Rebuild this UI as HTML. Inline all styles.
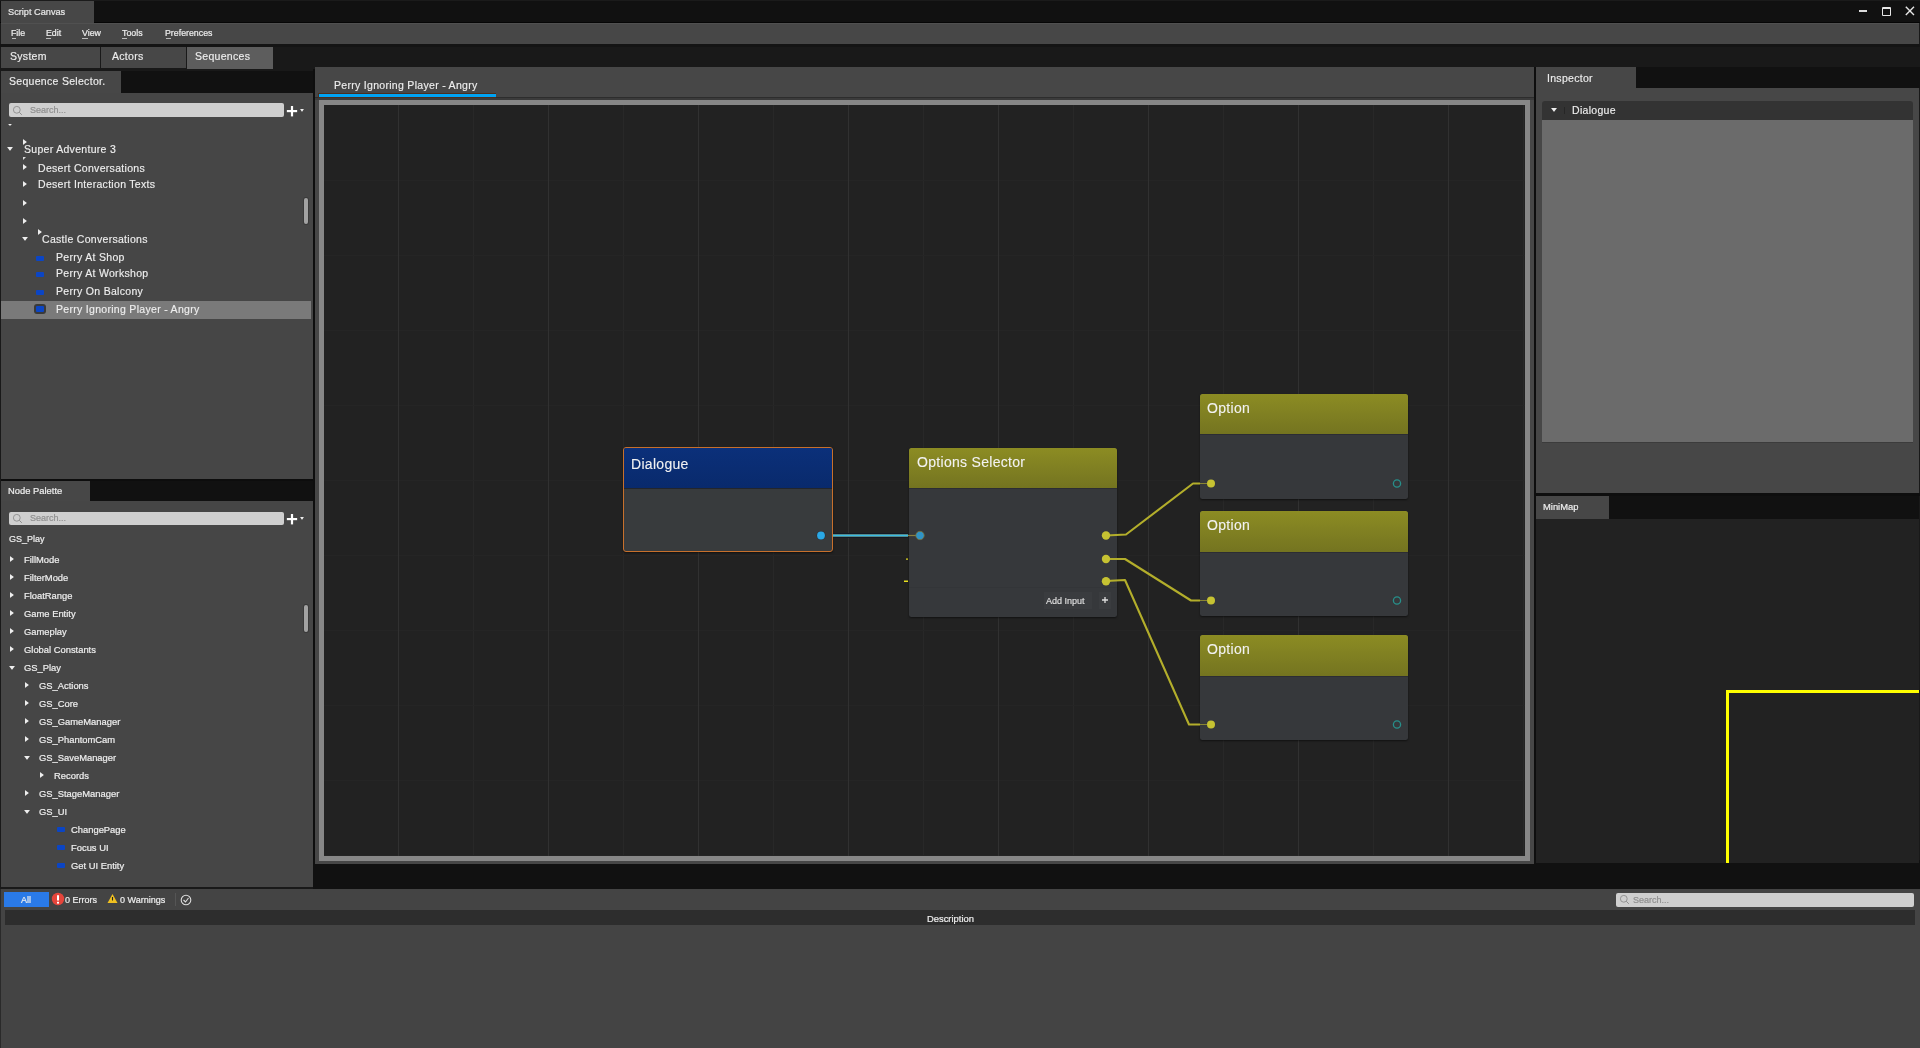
<!DOCTYPE html>
<html><head><meta charset="utf-8">
<style>
*{box-sizing:border-box;margin:0;padding:0}
html,body{width:1920px;height:1048px;overflow:hidden;background:#191919;font-family:"Liberation Sans",sans-serif;color:#eeeeee}
.a{position:absolute}
.t{position:absolute;white-space:nowrap;line-height:1;will-change:transform}
.ar{font-size:10.5px;letter-spacing:0.3px;-webkit-text-stroke:0.15px #eee;color:#eee}
.np{font-size:9.4px!important}
.os{font-size:9px;-webkit-text-stroke:0.2px currentColor}
.rt{position:absolute;filter:drop-shadow(0 0 0.6px #111);width:0;height:0;border-top:3.5px solid transparent;border-bottom:3.5px solid transparent;border-left:4px solid #eee}
.dn{position:absolute;filter:drop-shadow(0 0 0.6px #111);width:0;height:0;border-left:3.5px solid transparent;border-right:3.5px solid transparent;border-top:4px solid #eee}
.node{position:absolute;background:#36383b;border-radius:2.5px;overflow:hidden;box-shadow:0 1px 2px rgba(0,0,0,.5)}
.hd{background:linear-gradient(#8c8c23,#808022 50%,#747420);border-bottom:1px solid #2c2d33;box-sizing:content-box}
.nt{font-size:14px;color:#f2f2f2;letter-spacing:0.3px;-webkit-text-stroke:0.1px #f2f2f2}
.ic{position:absolute;width:8px;height:5px;background:#0b45c4;border-radius:1px}
</style></head><body>
<!-- title bar -->
<div class="a" style="left:0;top:0;width:1920px;height:23px;background:#111;border-top:1px solid #1b1b1b;border-bottom:1px solid #060606"></div>
<div class="a" style="left:0;top:44px;width:1920px;height:3px;background:#141414"></div>
<div class="a" style="left:1px;top:1px;width:93px;height:22px;background:#474747"></div>
<div class="t os" style="left:7.5px;top:8px;color:#e8e8e8;font-size:9.2px">Script Canvas</div>
<!-- window controls -->
<div class="a" style="left:1859px;top:10px;width:8px;height:2px;background:#ddd"></div>
<div class="a" style="left:1882px;top:7px;width:8.5px;height:8.5px;border:1.5px solid #e6e6e6;border-top-width:2px;border-radius:1px"></div>
<svg class="a" style="left:1905px;top:6px" width="10" height="10"><path d="M0.8 0.8L9 9M9 0.8L0.8 9" stroke="#e6e6e6" stroke-width="1.4"/></svg>
<!-- menu bar -->
<div class="a" style="left:1px;top:23px;width:1918px;height:21px;background:#474747;border-top:1px solid #505050"></div>
<div class="t os" style="left:11px;top:29px;font-size:8.8px">File</div>
<div class="t os" style="left:46px;top:29px;font-size:8.8px">Edit</div>
<div class="t os" style="left:82px;top:29px;font-size:8.8px">View</div>
<div class="t os" style="left:122px;top:29px;font-size:8.8px">Tools</div>
<div class="t os" style="left:165px;top:29px;font-size:8.8px">Preferences</div>
<div class="a" style="left:12px;top:37.5px;width:4px;height:1px;background:#bbb"></div>
<div class="a" style="left:46px;top:38px;width:5px;height:1px;background:#bbb"></div>
<div class="a" style="left:82px;top:38px;width:6px;height:1px;background:#bbb"></div>
<div class="a" style="left:122px;top:38px;width:5px;height:1px;background:#bbb"></div>
<div class="a" style="left:166px;top:38px;width:5px;height:1px;background:#bbb"></div>
<!-- top tabs -->
<div class="a" style="left:1px;top:47px;width:99px;height:21px;background:#474747"></div>
<div class="a" style="left:101px;top:47px;width:85px;height:21px;background:#474747"></div>
<div class="a" style="left:187px;top:47px;width:86px;height:22px;background:#5d5d5d"></div>
<div class="t ar" style="left:10px;top:50.7px">System</div>
<div class="t ar" style="left:112px;top:50.7px">Actors</div>
<div class="t ar" style="left:195px;top:50.7px">Sequences</div>

<!-- LEFT PANEL: sequence selector -->
<div class="a" style="left:1px;top:71px;width:312px;height:22px;background:#111"></div>
<div class="a" style="left:1px;top:71px;width:120px;height:22px;background:#474747"></div>
<div class="t ar" style="left:9px;top:76px">Sequence Selector.</div>
<div class="a" style="left:1px;top:93px;width:312px;height:386px;background:#464646"></div>
<!-- search -->
<div class="a" style="left:9px;top:103px;width:275px;height:14px;background:#cfcfcf;border-radius:2px"></div>
<svg class="a" style="left:12px;top:105px" width="11" height="11"><circle cx="4.8" cy="4.8" r="3.4" stroke="#8c8c8c" stroke-width="0.9" fill="none"/><path d="M7.3 7.3L9.8 9.8" stroke="#8c8c8c" stroke-width="1"/></svg>
<div class="t os" style="left:30px;top:106px;color:#8f8f8f">Search...</div>
<svg class="a" style="left:286px;top:105px;filter:drop-shadow(0 0 0.7px #000)" width="13" height="13"><path d="M6 1V11.5M0.8 6.2H11.2" stroke="#fff" stroke-width="2.3"/></svg>
<div class="dn" style="left:299.5px;top:109px;border-left-width:2px;border-right-width:2px;border-top-width:3px"></div>

<!-- tree -->
<div class="dn" style="left:8px;top:124px;border-left-width:2.5px;border-right-width:2.5px;border-top-width:2.5px"></div>
<div class="rt" style="left:23px;top:139px"></div>
<div class="a" style="left:23px;top:157px;width:0;height:0;border-left:3.5px solid #ddd;border-bottom:3px solid transparent"></div>
<div class="dn" style="left:7px;top:147px"></div>
<div class="t ar" style="left:24px;top:144px">Super Adventure 3</div>
<div class="rt" style="left:23px;top:164px"></div>
<div class="t ar" style="left:38px;top:163px">Desert Conversations</div>
<div class="rt" style="left:23px;top:181px"></div>
<div class="t ar" style="left:38px;top:179px">Desert Interaction Texts</div>
<div class="rt" style="left:23px;top:200px"></div>
<div class="rt" style="left:23px;top:218px"></div>
<div class="rt" style="left:38px;top:229px"></div>
<div class="dn" style="left:22px;top:237px"></div>
<div class="t ar" style="left:42px;top:234px">Castle Conversations</div>
<div class="ic" style="left:36px;top:256px"></div>
<div class="t ar" style="left:56px;top:252px">Perry At Shop</div>
<div class="ic" style="left:36px;top:272px"></div>
<div class="t ar" style="left:56px;top:268px">Perry At Workshop</div>
<div class="ic" style="left:36px;top:290px"></div>
<div class="t ar" style="left:56px;top:286px">Perry On Balcony</div>
<div class="a" style="left:1px;top:301px;width:310px;height:18px;background:#7a7a7a"></div>
<div class="a" style="left:34px;top:304px;width:12px;height:10px;background:#3a3a3a;border-radius:3px"></div>
<div class="ic" style="left:36px;top:306px;width:8px;height:6px"></div>
<div class="t ar" style="left:56px;top:304px">Perry Ignoring Player - Angry</div>
<!-- scrollbar -->
<div class="a" style="left:304px;top:197.5px;width:3.5px;height:26.5px;background:#a2a2a2;border-radius:2px;box-shadow:0 0 0 1px #3a3a3a"></div>

<!-- NODE PALETTE -->
<div class="a" style="left:1px;top:479px;width:312px;height:2px;background:#0d0d0d"></div>
<div class="a" style="left:1px;top:481px;width:312px;height:20px;background:#111"></div>
<div class="a" style="left:1px;top:481px;width:89px;height:20px;background:#474747"></div>
<div class="t os" style="left:8px;top:486px;font-size:9.4px">Node Palette</div>
<div class="a" style="left:1px;top:501px;width:312px;height:386px;background:#464646"></div>
<div class="a" style="left:9px;top:512px;width:275px;height:13px;background:#cfcfcf;border-radius:2px"></div>
<svg class="a" style="left:12px;top:513px" width="11" height="11"><circle cx="4.8" cy="4.8" r="3.4" stroke="#8c8c8c" stroke-width="0.9" fill="none"/><path d="M7.3 7.3L9.8 9.8" stroke="#8c8c8c" stroke-width="1"/></svg>
<div class="t os" style="left:30px;top:514px;color:#8f8f8f">Search...</div>
<svg class="a" style="left:286px;top:513px;filter:drop-shadow(0 0 0.7px #000)" width="13" height="13"><path d="M6 1V11.5M0.8 6.2H11.2" stroke="#fff" stroke-width="2.3"/></svg>
<div class="dn" style="left:299.5px;top:517px;border-left-width:2px;border-right-width:2px;border-top-width:3px"></div>
<div class="t os np" style="left:9px;top:535px;font-size:9px!important">GS_Play</div>
<div class="rt" style="left:10px;top:556px"></div>
<div class="t os np" style="left:24px;top:555px">FillMode</div>
<div class="rt" style="left:10px;top:574px"></div>
<div class="t os np" style="left:24px;top:573px">FilterMode</div>
<div class="rt" style="left:10px;top:592px"></div>
<div class="t os np" style="left:24px;top:591px">FloatRange</div>
<div class="rt" style="left:10px;top:610px"></div>
<div class="t os np" style="left:24px;top:609px">Game Entity</div>
<div class="rt" style="left:10px;top:628px"></div>
<div class="t os np" style="left:24px;top:627px">Gameplay</div>
<div class="rt" style="left:10px;top:646px"></div>
<div class="t os np" style="left:24px;top:645px">Global Constants</div>
<div class="dn" style="left:9px;top:666px"></div>
<div class="t os np" style="left:24px;top:663px">GS_Play</div>
<div class="rt" style="left:25px;top:682px"></div>
<div class="t os np" style="left:39px;top:681px">GS_Actions</div>
<div class="rt" style="left:25px;top:700px"></div>
<div class="t os np" style="left:39px;top:699px">GS_Core</div>
<div class="rt" style="left:25px;top:718px"></div>
<div class="t os np" style="left:39px;top:717px">GS_GameManager</div>
<div class="rt" style="left:25px;top:736px"></div>
<div class="t os np" style="left:39px;top:735px">GS_PhantomCam</div>
<div class="dn" style="left:24px;top:756px"></div>
<div class="t os np" style="left:39px;top:753px">GS_SaveManager</div>
<div class="rt" style="left:40px;top:772px"></div>
<div class="t os np" style="left:54px;top:771px">Records</div>
<div class="rt" style="left:25px;top:790px"></div>
<div class="t os np" style="left:39px;top:789px">GS_StageManager</div>
<div class="dn" style="left:24px;top:810px"></div>
<div class="t os np" style="left:39px;top:807px">GS_UI</div>
<div class="ic" style="left:57px;top:827px"></div>
<div class="t os np" style="left:71px;top:825px">ChangePage</div>
<div class="ic" style="left:57px;top:845px"></div>
<div class="t os np" style="left:71px;top:843px">Focus UI</div>
<div class="ic" style="left:57px;top:863px"></div>
<div class="t os np" style="left:71px;top:861px">Get UI Entity</div>
<div class="a" style="left:304px;top:605px;width:3.5px;height:27px;background:#a2a2a2;border-radius:2px;box-shadow:0 0 0 1px #3a3a3a"></div>

<!-- CANVAS PANEL -->
<div class="a" style="left:313px;top:69px;width:2px;height:820px;background:#0e0e0e"></div>
<div class="a" style="left:1534px;top:67px;width:2px;height:797px;background:#0e0e0e"></div>
<div class="a" style="left:1536px;top:493px;width:384px;height:3px;background:#0e0e0e"></div>
<div class="a" style="left:313px;top:860px;width:1607px;height:29px;background:#111"></div>
<div class="a" style="left:315px;top:67px;width:1219px;height:797px;background:#474747"></div>
<div class="t ar" style="left:334px;top:80px">Perry Ignoring Player - Angry</div>
<div class="a" style="left:315px;top:97px;width:1219px;height:3px;background:#3b3b3b;border-top:1px solid #2d2d2d"></div>
<div class="a" style="left:318px;top:93px;width:178px;height:5px;background:#4a2e1e"></div>
<div class="a" style="left:319px;top:94px;width:177px;height:3px;background:#00a2f2"></div>
<div class="a" style="left:319px;top:100px;width:1211px;height:761px;background:#878787"></div>
<svg class="a" style="left:324px;top:105px" width="1201" height="751">
<rect width="1201" height="751" fill="#222"/>
<rect x="149" y="0" width="1" height="751" fill="#282828"/>
<rect x="299" y="0" width="1" height="751" fill="#282828"/>
<rect x="449" y="0" width="1" height="751" fill="#282828"/>
<rect x="599" y="0" width="1" height="751" fill="#282828"/>
<rect x="749" y="0" width="1" height="751" fill="#282828"/>
<rect x="899" y="0" width="1" height="751" fill="#282828"/>
<rect x="1049" y="0" width="1" height="751" fill="#282828"/>
<rect x="1199" y="0" width="1" height="751" fill="#282828"/>
<rect x="0" y="75" width="1201" height="1" fill="#252525"/>
<rect x="0" y="150" width="1201" height="1" fill="#252525"/>
<rect x="0" y="225" width="1201" height="1" fill="#252525"/>
<rect x="0" y="300" width="1201" height="1" fill="#252525"/>
<rect x="0" y="375" width="1201" height="1" fill="#252525"/>
<rect x="0" y="450" width="1201" height="1" fill="#252525"/>
<rect x="0" y="525" width="1201" height="1" fill="#252525"/>
<rect x="0" y="600" width="1201" height="1" fill="#252525"/>
<rect x="0" y="675" width="1201" height="1" fill="#252525"/>
<rect x="0" y="750" width="1201" height="1" fill="#252525"/>
<rect x="74" y="0" width="1" height="751" fill="#313131"/>
<rect x="224" y="0" width="1" height="751" fill="#313131"/>
<rect x="374" y="0" width="1" height="751" fill="#313131"/>
<rect x="524" y="0" width="1" height="751" fill="#313131"/>
<rect x="674" y="0" width="1" height="751" fill="#313131"/>
<rect x="824" y="0" width="1" height="751" fill="#313131"/>
<rect x="974" y="0" width="1" height="751" fill="#313131"/>
<rect x="1124" y="0" width="1" height="751" fill="#313131"/>
</svg>
<!-- nodes -->
<div class="a node" style="left:623px;top:447px;width:210px;height:105px;border:1.5px solid #c7702c;border-radius:3px;background:#383b3d">
 <div class="hd" style="height:39.5px;background:linear-gradient(#0b307a,#092a6c);border-bottom-color:#23262c"></div>
</div>
<div class="t nt" style="left:631px;top:457px">Dialogue</div>
<div class="a node" style="left:909px;top:448px;width:208px;height:169px">
 <div class="hd ol" style="height:40px"></div>
 <div class="a" style="left:0;top:139px;width:208px;height:1px;background:#333538"></div>
 <div class="a" style="left:135px;top:144px;width:48px;height:17px;background:#3a3c3f"></div>
 <div class="a" style="left:190px;top:144px;width:12px;height:17px;background:#3a3c3f"></div>
</div>
<div class="t nt" style="left:917px;top:455px">Options Selector</div>
<div class="t os" style="left:1046px;top:597px;color:#ddd">Add Input</div>
<svg class="a" style="left:1101px;top:596px" width="8" height="8"><path d="M4 1V7M1 4H7" stroke="#ddd" stroke-width="1.3"/></svg>
<div class="a node" style="left:1200px;top:394px;width:208px;height:105px"><div class="hd ol" style="height:40px"></div></div>
<div class="t nt" style="left:1207px;top:401px">Option</div>
<div class="a node" style="left:1200px;top:511px;width:208px;height:105px"><div class="hd ol" style="height:41px"></div></div>
<div class="t nt" style="left:1207px;top:518px">Option</div>
<div class="a node" style="left:1200px;top:635px;width:208px;height:105px"><div class="hd ol" style="height:41px"></div></div>
<div class="t nt" style="left:1207px;top:642px">Option</div>
<svg class="a" style="left:0;top:0" width="1920" height="1048">
 <path d="M833 535.5H908" stroke="#141826" stroke-width="5"/>
 <path d="M833 535.5H908" stroke="#8a7a2a" stroke-width="2.6"/>
 <path d="M833 535.5H908" stroke="#3ab8e8" stroke-width="1.9"/>
 <path d="M908 535.5H916" stroke="#8a8040" stroke-width="1.2"/>
 <circle cx="821" cy="535.5" r="4.6" fill="#2c3138"/>
 <circle cx="821" cy="535.5" r="3.9" fill="#2aa8e6"/>
 <circle cx="920" cy="535.5" r="4.2" fill="#3094c6" stroke="#7a7035" stroke-width="0.8"/>
 <g stroke="#b3ae2b" stroke-width="2.1" fill="none" stroke-linejoin="round">
  <path d="M1106 535.5L1126 534.5L1193 483.5L1200 483.5"/>
  <path d="M1106 559L1125 559L1191 600.5L1200 600.5"/>
  <path d="M1106 581L1125 580L1189 724.5L1200 724.5"/>
 </g>
 <g stroke="#8a8632" stroke-width="1" fill="none">
  <path d="M1200 483.5H1207"/><path d="M1200 600.5H1207"/><path d="M1200 724.5H1207"/>
 </g>
 <g fill="#c6c232">
  <circle cx="1106" cy="535.5" r="4.2"/><circle cx="1106" cy="559" r="4.2"/><circle cx="1106" cy="581.3" r="4.2"/>
  <circle cx="1211" cy="483.5" r="4"/><circle cx="1211" cy="600.5" r="4"/><circle cx="1211" cy="724.5" r="4"/>
 </g>
 <g fill="none" stroke="#278f8a" stroke-width="1.3">
  <circle cx="1397" cy="483.5" r="3.6"/><circle cx="1397" cy="600.5" r="3.6"/><circle cx="1397" cy="724.5" r="3.6"/>
 </g>
 <rect x="906" y="558.5" width="2" height="1.2" fill="#e8e020"/>
 <rect x="904" y="580.5" width="4" height="1.5" fill="#e8e020"/>
</svg>


<!-- RIGHT PANEL -->
<div class="a" style="left:1536px;top:67px;width:384px;height:21px;background:#111"></div>
<div class="a" style="left:1536px;top:67px;width:100px;height:21px;background:#474747"></div>
<div class="t ar" style="left:1547px;top:73px">Inspector</div>
<div class="a" style="left:1536px;top:88px;width:383px;height:405px;background:#474747"></div>
<div class="a" style="left:1542px;top:101px;width:371px;height:19px;background:#333;border-radius:3px 3px 0 0"></div>
<div class="dn" style="left:1551px;top:108px"></div>
<div class="a" style="left:1564px;top:107px;width:1px;height:7px;background:#262626"></div>
<div class="t ar" style="left:1572px;top:105px">Dialogue</div>
<div class="a" style="left:1542px;top:120px;width:371px;height:323px;background:#6b6b6b;border-bottom:1px solid #3c3c3c"></div>
<div class="a" style="left:1536px;top:496px;width:383px;height:23px;background:#111"></div>
<div class="a" style="left:1536px;top:496px;width:73px;height:23px;background:#474747"></div>
<div class="t os" style="left:1542.5px;top:502px;font-size:9.4px">MiniMap</div>
<div class="a" style="left:1536px;top:519px;width:383px;height:344px;background:#222"></div>
<div class="a" style="left:1726px;top:690px;width:193px;height:173px;border-left:3px solid #ff0;border-top:3px solid #ff0"></div>

<!-- BOTTOM -->
<div class="a" style="left:0;top:889px;width:1920px;height:159px;background:#444;border-left:1px solid #2a2a2a"></div>
<div class="a" style="left:4px;top:892px;width:45px;height:15px;background:#2a7ae8"></div>
<div class="t os" style="left:21px;top:896px">All</div>
<svg class="a" style="left:51px;top:892px" width="14" height="14"><circle cx="7" cy="7" r="6.2" fill="#e5453b"/><path d="M7 3.2V8.6" stroke="#fff" stroke-width="2"/><rect x="6" y="9.8" width="2" height="1.8" fill="#fff"/></svg>
<div class="t os" style="left:65px;top:896px">0 Errors</div>
<svg class="a" style="left:107px;top:893px" width="11" height="11"><path d="M5.5 1L10.5 10H0.5Z" fill="#f0c020"/><path d="M5.5 4V7.5" stroke="#222" stroke-width="1.1"/></svg>
<div class="t os" style="left:120px;top:896px">0 Warnings</div>
<div class="a" style="left:175px;top:893px;width:1px;height:13px;background:#555"></div>
<svg class="a" style="left:180px;top:894px" width="12" height="12"><circle cx="6" cy="6" r="4.8" stroke="#ddd" stroke-width="1.1" fill="none"/><path d="M3.5 6L5.5 8L8.5 4" stroke="#ddd" stroke-width="1.1" fill="none"/></svg>
<div class="a" style="left:1616px;top:893px;width:298px;height:14px;background:#cfcfcf;border-radius:2px"></div>
<svg class="a" style="left:1619px;top:894px" width="11" height="11"><circle cx="4.8" cy="4.8" r="3.4" stroke="#8c8c8c" stroke-width="0.9" fill="none"/><path d="M7.3 7.3L9.8 9.8" stroke="#8c8c8c" stroke-width="1"/></svg>
<div class="t os" style="left:1633px;top:896px;color:#8f8f8f">Search...</div>
<div class="a" style="left:5px;top:910px;width:1910px;height:15px;background:#2d2d2d"></div>
<div class="t os" style="left:926.5px;top:914px;font-size:9.4px">Description</div>
</body></html>
